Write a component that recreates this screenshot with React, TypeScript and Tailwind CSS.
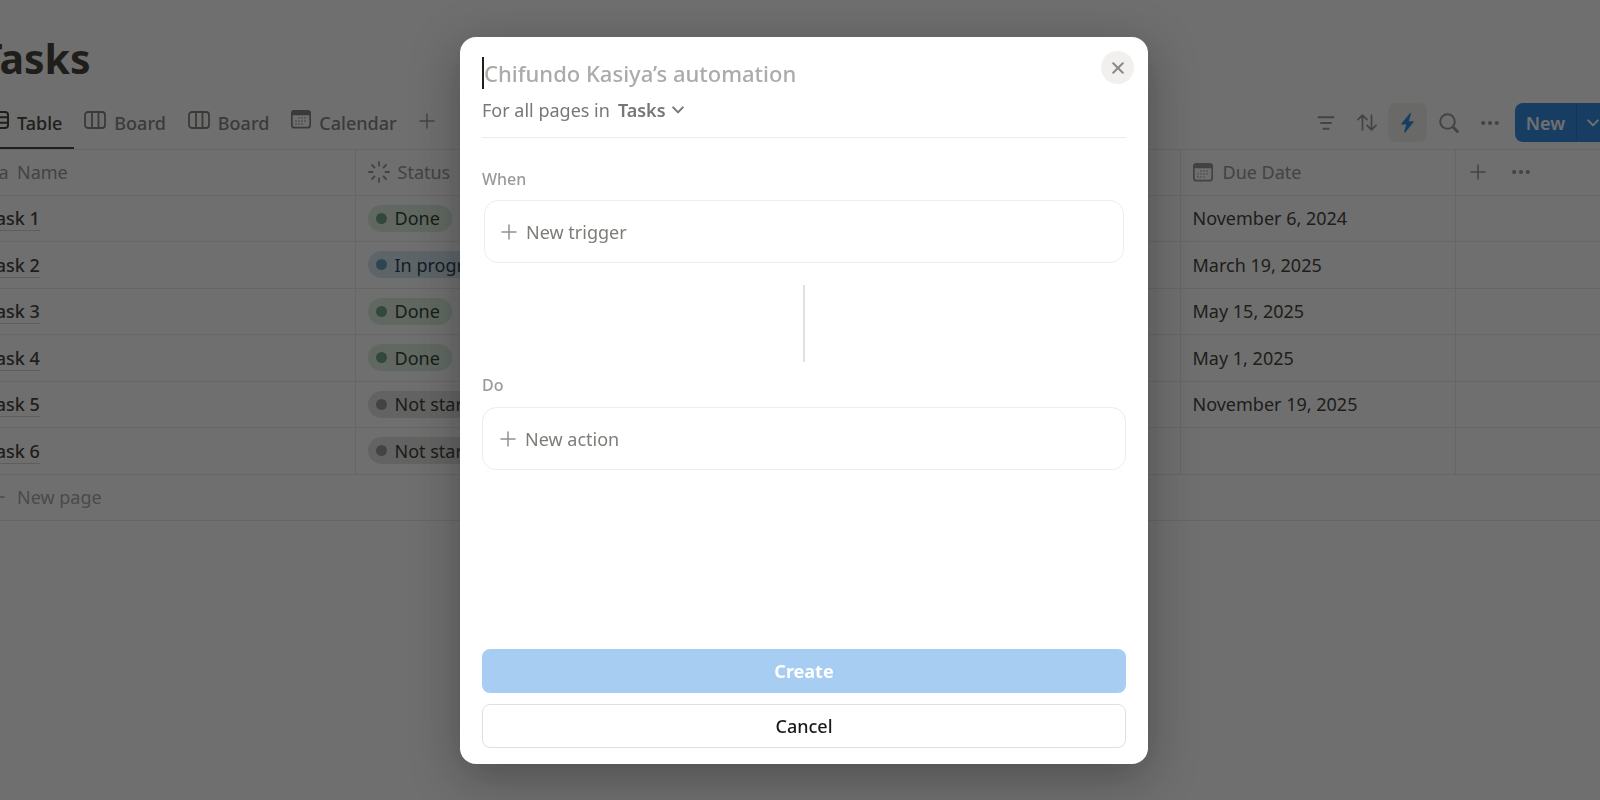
import React from 'react';

type IconProps = { className?: string };

// Thin plus sign used by the tabs, the table and the automation cards
const PlusIcon = ({ className }: IconProps) => (
  <svg className={className} viewBox="0 0 16 16" fill="none" stroke="currentColor" strokeWidth="1.5" strokeLinecap="round">
    <path d="M8 1v14M1 8h14" />
  </svg>
);

const DotsIcon = ({ className }: IconProps) => (
  <svg className={className} viewBox="0 0 18 6" fill="currentColor">
    <circle cx="2.2" cy="3" r="2.1" />
    <circle cx="9" cy="3" r="2.1" />
    <circle cx="15.8" cy="3" r="2.1" />
  </svg>
);

const ChevronIcon = ({ className }: IconProps) => (
  <svg className={className} viewBox="0 0 12 8" fill="none" stroke="currentColor" strokeWidth="2" strokeLinecap="round" strokeLinejoin="round">
    <path d="M1.2 1.4 6 6.4l4.8-5" />
  </svg>
);

const TableIcon = ({ className }: IconProps) => (
  <svg className={className} viewBox="0 0 22 18" fill="none" stroke="currentColor" strokeWidth="2">
    <rect x="1" y="1" width="20" height="16" rx="3" />
    <path d="M1 6.3h20M1 11.7h20M8 6v11" />
  </svg>
);

const BoardIcon = ({ className }: IconProps) => (
  <svg className={className} viewBox="0 0 22 18" fill="none" stroke="currentColor" strokeWidth="1.8">
    <rect x="1" y="1" width="20" height="16" rx="3" />
    <path d="M8 1v16M14.5 1v16" />
  </svg>
);

const CalendarIcon = ({ className }: IconProps) => (
  <svg className={className} viewBox="0 0 20 19" fill="currentColor">
    <path fillRule="evenodd" d="M3.2 0h13.6A3 3 0 0 1 20 3.2v12.1a3 3 0 0 1-3.2 3.2H3.2A3 3 0 0 1 0 15.3V3.2A3 3 0 0 1 3.2 0ZM1.7 5.2v9.9c0 1 .7 1.7 1.7 1.7h13.2c1 0 1.7-.7 1.7-1.7V5.2Z" />
    <g>
      <circle cx="8" cy="8" r=".75" />
      <circle cx="11" cy="8" r=".75" />
      <circle cx="14" cy="8" r=".75" />
      <circle cx="5" cy="11" r=".75" />
      <circle cx="8" cy="11" r=".75" />
      <circle cx="11" cy="11" r=".75" />
      <circle cx="14" cy="11" r=".75" />
      <circle cx="5" cy="14" r=".75" />
      <circle cx="8" cy="14" r=".75" />
      <circle cx="11" cy="14" r=".75" />
    </g>
  </svg>
);

const StatusIcon = ({ className }: IconProps) => (
  <svg className={className} viewBox="0 0 22 22" fill="none" stroke="currentColor" strokeWidth="1.8" strokeLinecap="round">
    <path d="M11 1v3.6M11 17.4V21M1 11h3.6M17.4 11H21M4 4l2.5 2.5M15.5 15.5 18 18M4 18l2.5-2.5M15.5 6.5 18 4" />
  </svg>
);

const FilterIcon = ({ className }: IconProps) => (
  <svg className={className} viewBox="0 0 18 14" fill="none" stroke="currentColor" strokeWidth="1.9" strokeLinecap="round">
    <path d="M1.5 1.3h15M4 7h10M6.5 12.7h5" />
  </svg>
);

const SortIcon = ({ className }: IconProps) => (
  <svg className={className} viewBox="0 0 20 17" fill="none" stroke="currentColor" strokeWidth="1.7" strokeLinecap="round" strokeLinejoin="round">
    <path d="M5.5 15.8V1.2M1 5.6l4.5-4.4L10 5.6M14.5 1.2v14.6M10 11.4l4.5 4.4 4.5-4.4" />
  </svg>
);

const BoltIcon = ({ className }: IconProps) => (
  <svg className={className} viewBox="0 0 13 20" fill="currentColor">
    <path d="M8.9.3.5 10.5c-.4.5-.1 1 .5 1h4.3L3.2 18.8c-.2.8.5 1.2 1 .6l8.3-10.1c.4-.5.1-1-.5-1H7.8L9.9.9c.2-.8-.5-1.2-1-.6Z" />
  </svg>
);

const SearchIcon = ({ className }: IconProps) => (
  <svg className={className} viewBox="0 0 20 20" fill="none" stroke="currentColor" strokeLinecap="round">
    <circle cx="8.5" cy="8.5" r="7.3" strokeWidth="2" />
    <path d="m14 14 4.4 4.4" strokeWidth="2.8" />
  </svg>
);

const CloseIcon = ({ className }: IconProps) => (
  <svg className={className} viewBox="0 0 12 12" fill="none" stroke="currentColor" strokeWidth="2" strokeLinecap="round">
    <path d="m1.2 1.2 9.6 9.6M10.8 1.2l-9.6 9.6" />
  </svg>
);

type Status = 'Done' | 'In progress' | 'Not started';

const statusStyles: Record<Status, { pill: string; dot: string }> = {
  Done: { pill: 'bg-[#dbeddb] text-[#1c3829]', dot: 'bg-[#6c9b7d]' },
  'In progress': { pill: 'bg-[#d3e5ef] text-[#183347]', dot: 'bg-[#5b97bd]' },
  'Not started': { pill: 'bg-[#e3e2e0] text-[#32302c]', dot: 'bg-[#91918e]' },
};

const tasks: { name: string; status: Status; due: string }[] = [
  { name: 'Task 1', status: 'Done', due: 'November 6, 2024' },
  { name: 'Task 2', status: 'In progress', due: 'March 19, 2025' },
  { name: 'Task 3', status: 'Done', due: 'May 15, 2025' },
  { name: 'Task 4', status: 'Done', due: 'May 1, 2025' },
  { name: 'Task 5', status: 'Not started', due: 'November 19, 2025' },
  { name: 'Task 6', status: 'Not started', due: '' },
];

const views = [
  { name: 'Board', icon: <BoardIcon className="h-[18px] w-[22px]" /> },
  { name: 'Board', icon: <BoardIcon className="h-[18px] w-[22px]" /> },
  { name: 'Calendar', icon: <CalendarIcon className="h-[19px] w-5" /> },
];

const Toolbar = () => (
  <div className="flex items-center gap-0.5 pt-1 text-[#91918e]">
    <button type="button" aria-label="Filter" className="grid size-[39px] place-items-center">
      <FilterIcon className="h-3.5 w-[18px]" />
    </button>
    <button type="button" aria-label="Sort" className="grid size-[39px] place-items-center">
      <SortIcon className="h-[17px] w-5" />
    </button>
    <button type="button" aria-label="Automations" className="grid size-[39px] place-items-center rounded-lg bg-[#efefee] text-[#2383e2]">
      <BoltIcon className="h-5 w-[13px]" />
    </button>
    <button type="button" aria-label="Search" className="grid size-[39px] place-items-center">
      <SearchIcon className="size-5" />
    </button>
    <button type="button" aria-label="More" className="grid size-[39px] place-items-center">
      <DotsIcon className="h-1.5 w-[18px]" />
    </button>
    <div className="ml-1 flex h-[39px] overflow-hidden rounded-lg bg-[#2383e2] text-white">
      <button type="button" className="w-[62px] border-r border-[#1b6ec2] font-semibold">New</button>
      <button type="button" aria-label="New options" className="grid w-8 place-items-center">
        <ChevronIcon className="h-2 w-3" />
      </button>
    </div>
  </div>
);

const TaskTable = () => (
  <table className="w-full table-fixed border-collapse text-left">
    <colgroup>
      <col className="w-[376px]" />
      <col className="w-[275px]" />
      <col className="w-[550px]" />
      <col className="w-[275px]" />
      <col />
    </colgroup>
    <thead className="text-[#91918e]">
      <tr className="h-[45px] border-b border-[#e9e9e7]">
        <th scope="col" className="border-r border-[#e9e9e7] pl-2 font-normal">
          <div className="flex items-center">
            <span aria-hidden="true" className="w-[30px]">Aa</span>Name
          </div>
        </th>
        <th scope="col" className="pl-3 font-normal">
          <div className="flex items-center gap-2">
            <StatusIcon className="size-[22px]" />Status
          </div>
        </th>
        <td className="border-r border-[#e9e9e7]" />
        <th scope="col" className="border-r border-[#e9e9e7] pl-3 font-normal">
          <div className="flex items-center gap-2.5">
            <CalendarIcon className="h-[19px] w-5" />Due Date
          </div>
        </th>
        <td className="pl-3.5">
          <div className="flex items-center gap-[26px]">
            <button type="button" aria-label="Add property"><PlusIcon className="size-4" /></button>
            <button type="button" aria-label="Table options"><DotsIcon className="h-1.5 w-[18px]" /></button>
          </div>
        </td>
      </tr>
    </thead>
    <tbody className="text-[#37352f]">
      {tasks.map((task) => (
        <tr key={task.name} className="h-[46px] border-b border-[#e9e9e7] even:h-[47px]">
          <td className="border-r border-[#e9e9e7] pl-2 font-medium">
            <a href="#task" className="border-b border-[#d3d2cf]">{task.name}</a>
          </td>
          <td className="pl-3">
            <span className={`inline-flex h-[27px] items-center gap-2 rounded-full pr-3 pl-2 align-middle ${statusStyles[task.status].pill}`}>
              <span className={`size-[11px] rounded-full ${statusStyles[task.status].dot}`} />
              {task.status}
            </span>
          </td>
          <td className="border-r border-[#e9e9e7]" />
          <td className="border-r border-[#e9e9e7] pl-3">{task.due}</td>
          <td />
        </tr>
      ))}
    </tbody>
  </table>
);

// Tasks database behind the dialog
const TasksPage = () => (
  <main className="-mr-[9px] -ml-[21px] pt-8">
    <h1 className="text-[41px] leading-[52px] font-bold text-[#37352f]">Tasks</h1>
    <div className="mt-2 flex items-stretch justify-between border-b border-[#e9e9e7] pl-2">
      <nav className="flex h-[57px] items-stretch font-medium text-[#7d7c78]">
        <button type="button" className="mr-2.5 flex items-center gap-2 border-b-2 border-[#37352f] pr-3 text-[#37352f]">
          <TableIcon className="h-[18px] w-[22px]" />
          <span className="pt-1.5">Table</span>
        </button>
        {views.map((view, i) => (
          <button key={i} type="button" className="mr-[22px] flex items-center gap-2 border-b-2 border-transparent">
            {view.icon}
            <span className="pt-1.5">{view.name}</span>
          </button>
        ))}
        <button type="button" aria-label="Add view" className="text-[#91918e]"><PlusIcon className="size-4" /></button>
      </nav>
      <Toolbar />
    </div>
    <TaskTable />
    <button type="button" className="flex h-[46px] w-full items-center gap-3 border-b border-[#e9e9e7] pl-2.5 text-[#a5a4a1]">
      <PlusIcon className="size-4" />New page
    </button>
  </main>
);

const AutomationDialog = () => (
  <div className="fixed inset-0 flex justify-center bg-[#0f0f0f]/60 pt-[37px] pb-9 pl-2">
    <div role="dialog" aria-label="New automation" className="relative flex w-full max-w-[688px] flex-col rounded-2xl bg-white px-[22px] pt-5 pb-4 shadow-[0_12px_48px_rgba(15,15,15,0.35)]">
      <button type="button" aria-label="Close" className="absolute top-3.5 right-3.5 grid size-[33px] place-items-center rounded-full bg-[#f1f0ef] text-[#8a8985]">
        <CloseIcon className="size-3" />
      </button>
      <div className="flex h-8 items-center">
        <span className="h-8 w-0.5 bg-[#1f1e1b]" />
        <input
          type="text"
          aria-label="Automation name"
          placeholder="Chifundo Kasiya’s automation"
          className="h-8 flex-1 bg-transparent text-[22px] font-medium caret-transparent outline-none placeholder:text-[#acaba9]"
        />
      </div>
      <div className="mt-1 flex h-[34px] items-center text-[#787774]">
        <label htmlFor="source">For all pages in</label>
        <div className="relative ml-2 flex items-center">
          <select id="source" className="field-sizing-content appearance-none bg-transparent pr-[18px] font-semibold outline-none">
            <option>Tasks</option>
          </select>
          <ChevronIcon className="pointer-events-none absolute right-0 h-2 w-3" />
        </div>
      </div>
      <hr className="mt-2.5 border-[#ededec]" />
      <h2 className="mt-[29px] text-base leading-6 font-medium text-[#9b9a97]">When</h2>
      <button type="button" className="mx-0.5 mt-[9px] flex h-[63px] items-center gap-[9px] rounded-[14px] border border-[#ededec] pl-4 text-[#7d7c78]">
        <PlusIcon className="size-4 text-[#91918e]" />New trigger
      </button>
      <div className="mt-[22px] h-[77px] w-0.5 self-center bg-[#e0e0df]" />
      <h2 className="mt-[11px] text-base leading-6 font-medium text-[#9b9a97]">Do</h2>
      <button type="button" className="mt-2.5 flex h-[63px] items-center gap-[9px] rounded-[14px] border border-[#ededec] pl-[17px] text-[#7d7c78]">
        <PlusIcon className="size-4 text-[#91918e]" />New action
      </button>
      <div className="mt-auto flex flex-col gap-[11px]">
        <button type="button" className="h-11 rounded-lg bg-[#a7cdf3] font-bold text-white">Create</button>
        <button type="button" className="h-11 rounded-lg border border-[#dfdfde] font-medium text-[#1a1a18]">Cancel</button>
      </div>
    </div>
  </div>
);

const App: React.FC = () => (
  <div className="relative min-h-screen overflow-hidden bg-white font-['Noto_Sans',sans-serif] text-[18px] leading-6">
    <TasksPage />
    <AutomationDialog />
  </div>
);

export default App;
